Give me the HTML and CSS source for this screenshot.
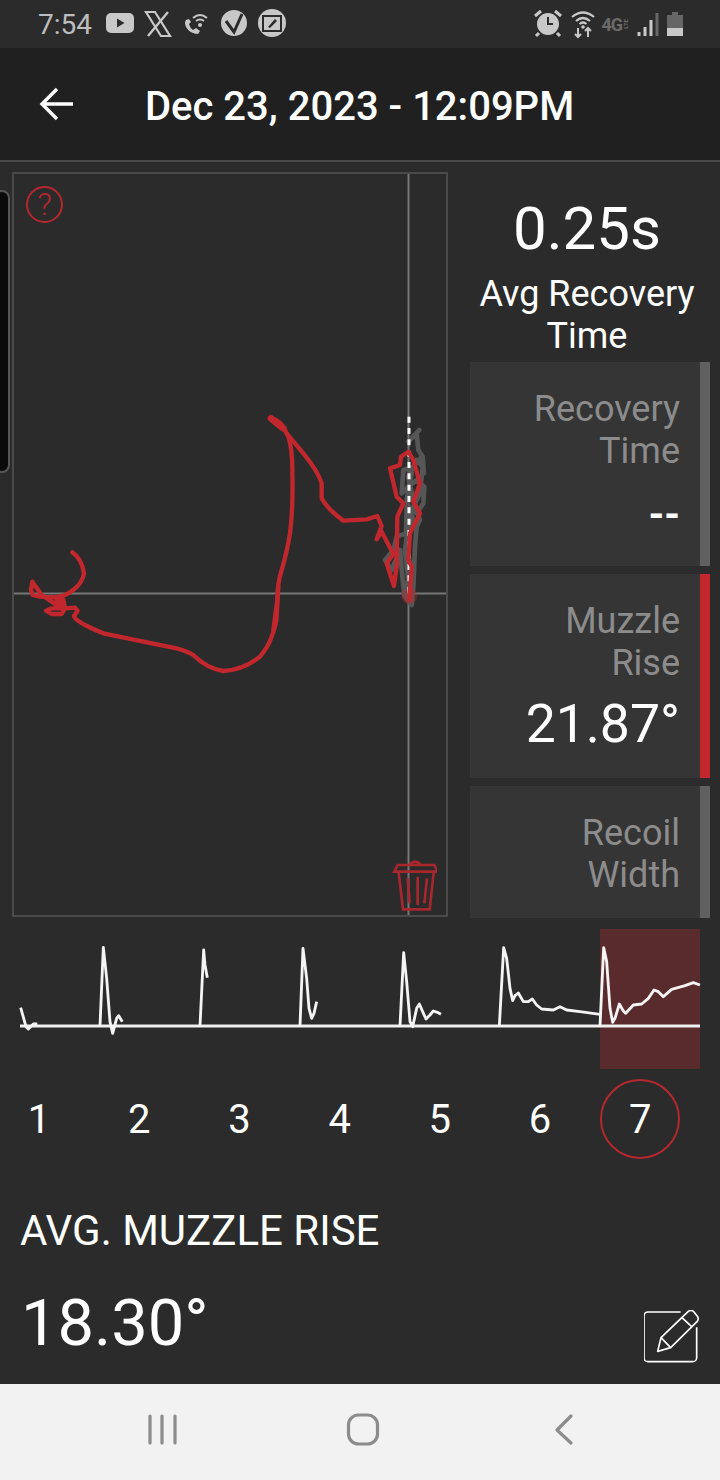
FILE: index.html
```html
<!DOCTYPE html>
<html lang="en">
<head>
<meta charset="utf-8">
<title>Shot detail</title>
<link rel="stylesheet" href="styles.css">
</head>
<body>
<div class="app">
  <div class="edge-handle"></div>
  <div class="statusbar">
    <div class="status-left">
      <span class="clock">7:54</span>
      <svg class="si" width="192" height="30" viewBox="0 0 192 30">
        <rect x="0" y="4" width="28" height="20" rx="5" fill="#c8c8c8"/>
        <path d="M11 9.5 L18.5 14 L11 18.5Z" fill="#2b2b2b"/>
        <path d="M40 3 L49 3 L64 27 L55 27Z" fill="none" stroke="#c8c8c8" stroke-width="2.2"/>
        <path d="M62 3 L42 27" stroke="#c8c8c8" stroke-width="2.4" fill="none"/>
        <path d="M80 11 Q78 13 80 18 Q84 25 92 25 L94 22 L90 19 L87 21 Q84 19 83 15 L85 13 L83 10Z" fill="#c8c8c8"/>
        <path d="M87 9 Q94 3 101 9 M90 12 Q94 9 98 12" stroke="#c8c8c8" stroke-width="2" fill="none"/>
        <circle cx="94" cy="16" r="2" fill="#c8c8c8"/>
        <circle cx="128" cy="14" r="13" fill="#c8c8c8"/>
        <path d="M120 12 L128 23 L136 5" stroke="#2b2b2b" stroke-width="3" fill="none"/>
        <circle cx="166" cy="14" r="14" fill="#c8c8c8"/>
        <rect x="157" y="7" width="18" height="15" fill="none" stroke="#2b2b2b" stroke-width="2"/>
        <path d="M162 18 L169 10 L171 12 L164 19Z" fill="#2b2b2b"/>
      </svg>
    </div>
    <div class="status-right">
      <svg width="30" height="30" viewBox="0 0 30 30">
        <circle cx="15" cy="15" r="11" fill="#c8c8c8"/>
        <path d="M15 8 V15 H20" stroke="#2b2b2b" stroke-width="2" fill="none"/>
        <path d="M2 7 L8 2 M28 7 L22 2 M6 24 L3 27 M24 24 L27 27" stroke="#c8c8c8" stroke-width="3"/>
      </svg>
      <svg width="24" height="30" viewBox="0 0 24 30">
        <path d="M1 8 Q12 -1 23 8 M5 12 Q12 6 19 12 M8.500 15 Q12 12 15.500 15" stroke="#c8c8c8" stroke-width="2.200" fill="none"/>
        <circle cx="12" cy="18" r="1.800" fill="#c8c8c8"/>
        <path d="M7 19 V28 M4 25 L7 28 L10 25 M17 28 V19 M14 22 L17 19 L20 22" stroke="#c8c8c8" stroke-width="2" fill="none"/>
      </svg>
      <span class="net">4G<span class="lte">LTE</span></span>
      <svg width="22" height="26" viewBox="0 0 22 26">
        <path d="M2 25 V21 M8 25 V16 M14 25 V9" stroke="#c8c8c8" stroke-width="3"/>
        <path d="M20 25 V2" stroke="#666" stroke-width="3"/>
      </svg>
      <svg width="16" height="26" viewBox="0 0 16 26">
        <path d="M5 1 H11 V4 H16 V17 H0 V4 H5Z" fill="#666"/>
        <rect x="0" y="17" width="16" height="8" fill="#c8c8c8"/>
      </svg>
    </div>
  </div>
  <header class="topbar">
    <svg class="back" width="36" height="36" viewBox="0 0 36 36">
      <path d="M34 18 H4 M18 3 L3 18 L18 33" stroke="#fff" stroke-width="3.400" fill="none"/>
    </svg>
    <h1 class="title">Dec 23, 2023 - 12:09PM</h1>
  </header>
  <main class="main">
    <section class="plot">
      <svg class="plot-svg" viewBox="14 174 432 741">
        <path class="axis" d="M408.500 174 V915 M14 593.500 H446"/>
        <g transform="translate(240 400) scale(.33333)">
          <path class="trace-grey" d="M538 90 L505 125 L530 100 L535 150 L548 170 L552 220 L545 170 L520 200 L490 210 L485 280 L505 260 L530 240 L553 260 L550 310 L530 340 L500 320 L498 400 L470 410 L460 450 L435 480 L455 510 L480 450 L490 560 L495 590 L515 615 L520 560 L525 440 L530 380 L540 360 L520 300 L505 230 L530 180 L548 200 L540 280 L510 340 L495 450 L505 540 L490 580 L510 600 L515 520 L500 440 L520 360 L500 300 L515 220"/>
          <circle cx="508" cy="588" r="24" fill="#c1272d" opacity=".35"/>
          <path class="dash" d="M507 50 V590"/>
          <path class="trace-red" d="M93 55 Q115 58 130 80 L145 110 Q158 150 157 220 Q160 320 150 400 Q140 460 125 510 Q112 550 112 600 L100 690"/>
          <path class="trace-blob" d="M93 55 L130 85"/>
          <path class="trace-red" d="M140 100 L190 160 Q235 215 245 250 L245 295 Q260 325 310 362 L380 358 L412 348 L425 378 L410 418 L425 395 L460 462 L440 490 L462 558 L470 500 L472 350 L490 310 L470 290 L450 205 L480 195 L483 170 L505 155 L520 180 L540 250 L520 305 L540 340 L510 400 L505 480 L515 500 L508 600"/>
        </g>
        <g transform="translate(10 540) scale(.33333)">
          <path class="trace-red" d="M187 37 Q215 55 222 100 Q215 140 165 165 L135 172 L90 170 L68 165 L63 150 L67 125 L95 165 L155 205 L125 205 L108 212 L125 222 L155 222 L165 205 L140 180 L160 178 L165 205 L195 203 L203 212 L192 228 Q195 245 280 280 L400 305 L500 325 Q535 335 550 345 Q590 385 640 393 Q700 390 750 350 Q775 320 785 290 Q800 250 800 230 L805 140"/>
        </g>
      </svg>
      <div class="help">?</div>
      <svg class="trash" width="46" height="54" viewBox="0 0 138 162">
        <path d="M10 41 L20 21 H130 L140 41Z M56 21 Q73 1 90 21 M23 44 L36 154 H116 L128 44 M50 61 L56 136 M80 56 V141 M108 61 L100 136" fill="none" stroke="#a8262d" stroke-width="8"/>
      </svg>
    </section>
    <aside class="side">
      <div class="summary">
        <div class="big">0.25s</div>
        <div class="summary-label">Avg Recovery Time</div>
      </div>
      <div class="card">
        <div class="card-label">Recovery Time</div>
        <div class="card-value dash-value">--</div>
      </div>
      <div class="card card-active">
        <div class="card-label">Muzzle Rise</div>
        <div class="card-value">21.87°</div>
      </div>
      <div class="card">
        <div class="card-label">Recoil Width</div>
      </div>
    </aside>
  </main>
  <svg class="spark" width="720" height="154" viewBox="0 925 720 154">
    <rect x="600" y="929" width="100" height="140" fill="#5a2b2d"/>
    <path class="base" d="M20 1026 H700"/>
    <g transform="translate(0 925) scale(.33333)">
      <path class="line" d="M62 248 L78 305 L85 312 L100 297 L112 297"/>
      <path class="line" d="M300 303 L310 67 L320 160 L330 290 L338 325 L350 280 L356 272 L367 290"/>
      <path class="line" d="M600 303 L611 75 L615 120 L622 158"/>
      <path class="line" d="M900 303 L909 70 L920 160 L927 250 L935 280 L942 265 L950 230"/>
    </g>
    <g transform="translate(360 925) scale(.33333)">
      <path class="line" d="M120 303 L131 83 L140 170 L150 290 L158 305 L170 250 L178 237 L188 260 L198 282 L210 270 L220 258 L232 262 L243 268"/>
      <path class="line" d="M418 303 L431 68 L440 100 L450 190 L458 227 L465 212 L475 204 L490 230 L505 230 L517 222 L530 240 L545 252 L580 255 L600 245 L620 255 L660 260 L720 268"/>
      <path class="line" d="M720 303 L731 68 L740 110 L750 250 L758 292 L765 280 L778 237 L790 258 L797 265 L820 240 L845 237 L865 220 L882 195 L895 200 L910 215 L935 193 L975 182 L1000 173 L1020 180"/>
    </g>
  </svg>
  <div class="shots">
    <div class="shot">1</div>
    <div class="shot">2</div>
    <div class="shot">3</div>
    <div class="shot">4</div>
    <div class="shot">5</div>
    <div class="shot">6</div>
    <div class="shot shot-active"><span class="ring">7</span></div>
  </div>
  <h2 class="metric-name">AVG. MUZZLE RISE</h2>
  <div class="metric-row">
    <div class="metric-value">18.30°</div>
    <svg class="edit" width="60" height="54" viewBox="0 0 180 162">
      <path d="M110 6 H12 A12 12 0 0 0 0 18 V143 A12 12 0 0 0 12 155 H146 A12 12 0 0 0 158 143 V52" fill="none" stroke="#fff" stroke-width="5"/>
      <path d="M41 124 L51 83 L133 4 Q142 -2 150 6 L161 20 Q165 28 159 35 L80 113Z M51 83 L80 113 M113 22 L143 50" fill="none" stroke="#fff" stroke-width="5" stroke-linejoin="round"/>
    </svg>
  </div>
  <nav class="navbar">
    <svg width="40" height="40" viewBox="0 0 40 40"><path d="M8 6 V33 M20 6 V33 M33 6 V33" class="nav-ico"/></svg>
    <svg width="40" height="40" viewBox="0 0 40 40"><rect x="5.500" y="5" width="29" height="29" rx="10" class="nav-ico"/></svg>
    <svg width="40" height="40" viewBox="0 0 40 40"><path d="M27 6 L13 20 L27 33" class="nav-ico"/></svg>
  </nav>
</div>
</body>
</html>
```
FILE: styles.css
```css
* { box-sizing: border-box; }
html, body { margin: 0; padding: 0; }
body { background: #2b2b2b; font-family: Roboto, "Liberation Sans", sans-serif; color: #fff; }
.app { position: relative; width: 720px; height: 1480px; overflow: hidden; display: flex; flex-direction: column; background: #2b2b2b; }

.edge-handle { position: absolute; left: -6px; top: 190px; width: 16px; height: 283px; background: #0a0a0a; border: 2px solid #555; border-radius: 8px; }

.statusbar { height: 48px; flex: none; display: flex; justify-content: space-between; align-items: center; padding: 0 37px 0 38px; }
.status-left { display: flex; align-items: center; gap: 12px; }
.clock { font-size: 28px; color: #bdbdbd; }
.si { display: block; margin-left: 2px; }
.status-right { display: flex; align-items: center; gap: 8px; }
.net { font-size: 18px; font-weight: 700; color: #6a6a6a; display: flex; align-items: center; justify-content: flex-end; width: 26px; letter-spacing: -1px; }
.lte { font-size: 6px; writing-mode: vertical-rl; transform: rotate(180deg); letter-spacing: 0; }

.topbar { height: 114px; flex: none; display: flex; align-items: center; padding: 0 0 0 39px; background: #202020; border-bottom: 2px solid #4a4a4a; }
.back { display: block; flex: none; margin-right: 70px; }
.title { margin: 4px 0 0; font-size: 40px; font-weight: 500; white-space: nowrap; }

.main { height: 764px; flex: none; display: flex; padding: 10px 10px 0 12px; gap: 22px; overflow: hidden; }
.plot { position: relative; width: 436px; height: 745px; flex: none; border: 2px solid #4a4a4a; }
.plot-svg { display: block; width: 432px; height: 741px; }
.axis { stroke: #777; stroke-width: 2; fill: none; }
.dash { stroke: #fff; stroke-width: 9; stroke-dasharray: 18 16; fill: none; }
.trace-red { stroke: #c1272d; stroke-width: 13; fill: none; stroke-linejoin: round; stroke-linecap: round; }
.trace-blob { stroke: #c1272d; stroke-width: 20; fill: none; stroke-linecap: round; }
.trace-grey { stroke: #565656; stroke-width: 14; fill: none; stroke-linejoin: round; stroke-linecap: round; }
.help { position: absolute; left: 12px; top: 12px; width: 37px; height: 37px; border: 2px solid #b5282e; border-radius: 50%; color: #b5282e; font-size: 32px; font-weight: 300; line-height: 33px; text-align: center; }
.trash { position: absolute; left: 377px; top: 684px; }

.side { width: 240px; flex: none; height: 746px; overflow: hidden; display: flex; flex-direction: column; gap: 8px; }
.summary { height: 182px; flex: none; text-align: center; padding-top: 21px; margin-left: -8px; margin-right: -2px; }
.big { font-size: 60px; line-height: 72px; }
.summary-label { font-size: 36px; line-height: 42px; margin-top: 8px; }
.card { height: 204px; flex: none; background: #353535; border-right: 10px solid #606060; padding: 26px 20px 0 40px; text-align: right; }
.card-active { border-right-color: #c1272d; }
.card-label { font-size: 36px; line-height: 42px; color: #8c8c8c; }
.card-value { font-size: 53.500px; line-height: 60px; margin-top: 10px; }
.dash-value { font-size: 40px; font-weight: 700; line-height: 66px; }

.spark { display: block; flex: none; margin-top: -1px; }
.base { stroke: #f0f0f0; stroke-width: 3; fill: none; }
.line { stroke: #f4f4f4; stroke-width: 8.500; fill: none; stroke-linejoin: round; }

.shots { display: flex; height: 80px; flex: none; margin-left: -11px; }
.shot { width: 100.200px; flex: none; font-size: 40px; font-weight: 400; display: flex; align-items: center; justify-content: center; }
.ring { width: 80px; height: 80px; border: 2.500px solid #b5282e; border-radius: 50%; display: flex; align-items: center; justify-content: center; }

.metric-name { margin: 48px 0 0; padding-left: 20px; font-size: 42px; line-height: 48px; font-weight: 400; }
.metric-row { display: flex; justify-content: space-between; align-items: flex-end; padding: 0 16px 0 21px; margin-top: 28px; }
.metric-value { font-size: 65px; line-height: 80px; font-weight: 400; }
.edit { display: block; margin-bottom: -1px; }

.navbar { margin-top: auto; height: 96px; flex: none; background: #f2f2f2; display: flex; justify-content: center; align-items: center; gap: 161px; padding: 0 0 4px 6px; }
.nav-ico { fill: none; stroke: #8c8c8c; stroke-width: 3.200; stroke-linecap: round; stroke-linejoin: round; }
```
